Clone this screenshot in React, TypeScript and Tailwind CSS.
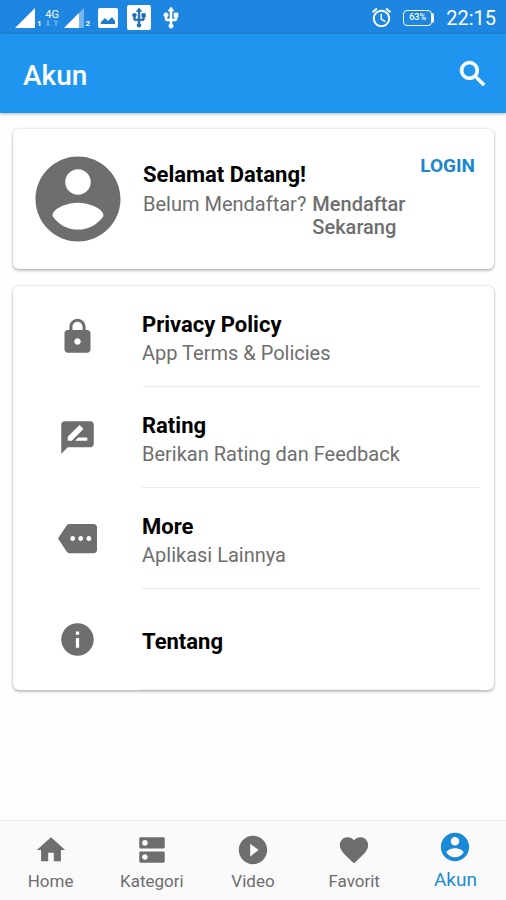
import type { ReactNode } from "react";

const paths = {
  account:
    "M12 2C6.48 2 2 6.48 2 12s4.48 10 10 10 10-4.48 10-10S17.52 2 12 2zm0 3c1.66 0 3 1.34 3 3s-1.34 3-3 3-3-1.34-3-3 1.34-3 3-3zm0 14.2c-2.5 0-4.71-1.28-6-3.22.03-1.99 4-3.08 6-3.08 1.99 0 5.97 1.09 6 3.08-1.29 1.94-3.5 3.22-6 3.22z",
  search:
    "M15.5 14h-.79l-.28-.27C15.41 12.59 16 11.11 16 9.5 16 5.91 13.09 3 9.5 3S3 5.91 3 9.5 5.91 16 9.5 16c1.61 0 3.09-.59 4.23-1.57l.27.28v.79l5 4.99L20.49 19l-4.99-5zm-6 0C7.01 14 5 11.99 5 9.5S7.01 5 9.5 5 14 7.01 14 9.5 11.99 14 9.5 14z",
  lock: "M18 8h-1V6c0-2.76-2.24-5-5-5S7 3.24 7 6v2H6c-1.1 0-2 .9-2 2v10c0 1.1.9 2 2 2h12c1.1 0 2-.9 2-2V10c0-1.1-.9-2-2-2zm-6 9c-1.1 0-2-.9-2-2s.9-2 2-2 2 .9 2 2-.9 2-2 2zm3.1-9H8.9V6c0-1.71 1.39-3.1 3.1-3.1 1.71 0 3.1 1.39 3.1 3.1v2z",
  review:
    "M20 2H4c-1.1 0-1.99.9-1.99 2L2 22l4-4h14c1.1 0 2-.9 2-2V4c0-1.1-.9-2-2-2zM6 14v-2.47l6.88-6.88c.2-.2.51-.2.71 0l1.77 1.77c.2.2.2.51 0 .71L8.47 14H6zm12 0h-7.5l2-2H18v2z",
  more: "M22 3H7c-.69 0-1.23.35-1.59.88L0 12l5.41 8.11c.36.53.9.89 1.59.89h15c1.1 0 2-.9 2-2V5c0-1.1-.9-2-2-2zM9 13.5c-.83 0-1.5-.67-1.5-1.5s.67-1.5 1.5-1.5 1.5.67 1.5 1.5-.67 1.5-1.5 1.5zm5 0c-.83 0-1.5-.67-1.5-1.5s.67-1.5 1.5-1.5 1.5.67 1.5 1.5-.67 1.5-1.5 1.5zm5 0c-.83 0-1.5-.67-1.5-1.5s.67-1.5 1.5-1.5 1.5.67 1.5 1.5-.67 1.5-1.5 1.5z",
  info: "M12 2C6.48 2 2 6.48 2 12s4.48 10 10 10 10-4.48 10-10S17.52 2 12 2zm1 15h-2v-6h2v6zm0-8h-2V7h2v2z",
  home: "M10 20v-6h4v6h5v-8h3L12 3 2 12h3v8z",
  category:
    "M20 13H4c-.55 0-1 .45-1 1v6c0 .55.45 1 1 1h16c.55 0 1-.45 1-1v-6c0-.55-.45-1-1-1zM7 19c-1.1 0-2-.9-2-2s.9-2 2-2 2 .9 2 2-.9 2-2 2zM20 3H4c-.55 0-1 .45-1 1v6c0 .55.45 1 1 1h16c.55 0 1-.45 1-1V4c0-.55-.45-1-1-1zM7 9c-1.1 0-2-.9-2-2s.9-2 2-2 2 .9 2 2-.9 2-2 2z",
  play: "M12 2C6.48 2 2 6.48 2 12s4.48 10 10 10 10-4.48 10-10S17.52 2 12 2zm-2 14.5v-9l6 4.5-6 4.5z",
  heart:
    "M12 21.35l-1.45-1.32C5.4 15.36 2 12.28 2 8.5 2 5.42 4.42 3 7.5 3c1.74 0 3.41.81 4.5 2.09C13.09 3.81 14.76 3 16.5 3 19.58 3 22 5.42 22 8.5c0 3.78-3.4 6.86-8.55 11.54L12 21.35z",
  usb: "M15 7v4h1v2h-3V5h2l-3-4-3 4h2v8H8v-2.07c.7-.37 1.2-1.08 1.2-1.93 0-1.21-.99-2.2-2.2-2.2-1.21 0-2.2.99-2.2 2.2 0 .85.5 1.56 1.2 1.93V13c0 1.11.89 2 2 2h3v3.05c-.71.37-1.2 1.1-1.2 1.95 0 1.22.99 2.2 2.2 2.2 1.21 0 2.2-.98 2.2-2.2 0-.85-.49-1.58-1.2-1.95V15h3c1.11 0 2-.89 2-2v-2h1V7h-4z",
  alarm:
    "M22 5.72l-4.6-3.86-1.29 1.53 4.6 3.86L22 5.72zM7.88 3.39L6.6 1.86 2 5.71l1.29 1.53 4.59-3.85zM12.5 8H11v6l4.75 2.85.75-1.23-4-2.37V8zM12 4c-4.97 0-9 4.03-9 9s4.02 9 9 9c4.97 0 9-4.03 9-9s-4.03-9-9-9zm0 16c-3.87 0-7-3.13-7-7s3.13-7 7-7 7 3.13 7 7-3.13 7-7 7z",
};

type IconName = keyof typeof paths;

function Icon({ name, className }: { name: IconName; className: string }) {
  return (
    <svg
      viewBox="0 0 24 24"
      fill="currentColor"
      stroke="currentColor"
      strokeWidth={name === "usb" || name === "search" ? 0.6 : 0}
      aria-hidden="true"
      className={`shrink-0 ${className}`}
    >
      <path d={paths[name]} />
    </svg>
  );
}

function Signal({ faded = false, sim }: { faded?: boolean; sim: string }) {
  return (
    <span className="flex items-end">
      <svg viewBox="0 0 20 20" fill="currentColor" aria-hidden="true" className="size-5">
        {faded ? (
          <>
            <path d="M0 20L20 0v20z" opacity=".4" />
            <path d="M0 20L15 5v15z" />
          </>
        ) : (
          <path d="M0 20L20 0v20z" />
        )}
      </svg>
      <span className="ml-0.5 text-[8px] leading-[8px] font-bold">{sim}</span>
    </span>
  );
}

function StatusBar() {
  return (
    <div className="flex h-[34px] items-center justify-between bg-[#1c86e0] pt-px pr-[10px] pl-[15px] text-white">
      <div className="flex items-center">
        <Signal sim="1" />
        <span className="ml-0.5 flex w-[17px] flex-col items-center text-[11px] leading-[10px]">
          4G
          <svg viewBox="0 0 14 6" className="h-1.5 w-3.5 opacity-30" fill="currentColor" aria-hidden="true">
            <path d="M4 0v4h2L3 6 0 4h2V0zM10 6V2H8l3-2 3 2h-2v4z" />
          </svg>
        </span>
        <span className="ml-[3px]">
          <Signal faded sim="2" />
        </span>
        <svg viewBox="0 0 20 20" className="ml-2 size-5" aria-hidden="true">
          <rect width="20" height="20" rx="2" fill="currentColor" />
          <path d="M3 16v-2l4-4 3 3 4-4 3 4v3z" fill="#1c7ac8" />
        </svg>
        <span className="ml-[9px] flex h-[25px] w-6 items-center justify-center rounded-xs bg-white text-[#1d6faf]">
          <Icon name="usb" className="size-[22px]" />
        </span>
        <Icon name="usb" className="ml-2 size-6" />
      </div>
      <div className="flex items-center">
        <Icon name="alarm" className="size-[23px]" />
        <span className="ml-[10px] flex items-center">
          <span className="flex h-4 w-[29px] items-center justify-center rounded-sm border border-white text-[9px] leading-none font-medium">
            63%
          </span>
          <span className="h-2.5 w-0.5 rounded-r-xs bg-white" />
        </span>
        <span className="ml-3 text-xl">22:15</span>
      </div>
    </div>
  );
}

function Card({ children }: { children: ReactNode }) {
  return (
    <section className="rounded-md bg-white shadow-[0_2px_3px_rgba(0,0,0,0.22),0_0_3px_rgba(0,0,0,0.18)]">
      {children}
    </section>
  );
}

const menu: { icon: IconName; title: string; subtitle?: string }[] = [
  { icon: "lock", title: "Privacy Policy", subtitle: "App Terms & Policies" },
  { icon: "review", title: "Rating", subtitle: "Berikan Rating dan Feedback" },
  { icon: "more", title: "More", subtitle: "Aplikasi Lainnya" },
  { icon: "info", title: "Tentang" },
];

const tabs: { icon: IconName; label: string; active?: boolean }[] = [
  { icon: "home", label: "Home" },
  { icon: "category", label: "Kategori" },
  { icon: "play", label: "Video" },
  { icon: "heart", label: "Favorit" },
  { icon: "account", label: "Akun", active: true },
];

export default function App() {
  return (
    <div className="flex min-h-screen flex-col bg-[#fefefe] font-['Roboto',sans-serif] text-[#6e6e6e]">
      <StatusBar />
      <header className="flex h-[79px] items-center justify-between bg-[#1e96f0] pr-4 pl-[23px] text-white shadow-[0_1px_3px_rgba(0,0,0,0.3)]">
        <h1 className="pt-1 text-[28px] leading-8 font-medium">Akun</h1>
        <button type="button" aria-label="Cari">
          <Icon name="search" className="size-[34px]" />
        </button>
      </header>

      <main className="flex flex-1 flex-col gap-[17px] pt-4 pr-3 pl-[13px]">
        <Card>
          <div className="flex h-[140px] items-start pt-[19px] pr-[19px] pl-[14px]">
            <Icon name="account" className="size-[102px]" />
            <div className="ml-[14px] flex-1 pt-[13px]">
              <h2 className="text-[22px] leading-7 font-bold text-black">Selamat Datang!</h2>
              <div className="flex gap-1.5 pt-1 text-xl leading-[23px]">
                <span className="whitespace-nowrap">Belum Mendaftar?</span>
                <a href="#daftar" className="font-medium">
                  Mendaftar Sekarang
                </a>
              </div>
            </div>
            <button type="button" className="mt-1.5 text-[19px] leading-6 font-bold text-[#1a86d0]">
              LOGIN
            </button>
          </div>
        </Card>

        <Card>
          <ul>
            {menu.map((item) => (
              <li key={item.title}>
                <a href="#menu" className="flex h-[101px] items-center pr-[14px]">
                  <span className="flex w-[129px] justify-center">
                    <Icon name={item.icon} className="size-[39px]" />
                  </span>
                  <span className="flex h-full flex-1 flex-col justify-center border-b border-[#ebebeb] pt-[5px]">
                    <span className="text-[22px] leading-7 font-bold text-black">{item.title}</span>
                    {item.subtitle && <span className="text-xl leading-7">{item.subtitle}</span>}
                  </span>
                </a>
              </li>
            ))}
          </ul>
        </Card>
      </main>

      <nav className="grid h-20 grid-cols-5 border-t border-[#ececec] bg-[#fafafa]">
        {tabs.map((tab) => (
          <a
            key={tab.label}
            href="#tab"
            className={`flex flex-col items-center ${
              tab.active ? "pt-[9px] text-[19px] leading-8 text-[#1a8ad8]" : "pt-3 text-[17px] leading-7"
            }`}
          >
            <Icon name={tab.icon} className="size-[34px]" />
            {tab.label}
          </a>
        ))}
      </nav>
    </div>
  );
}
